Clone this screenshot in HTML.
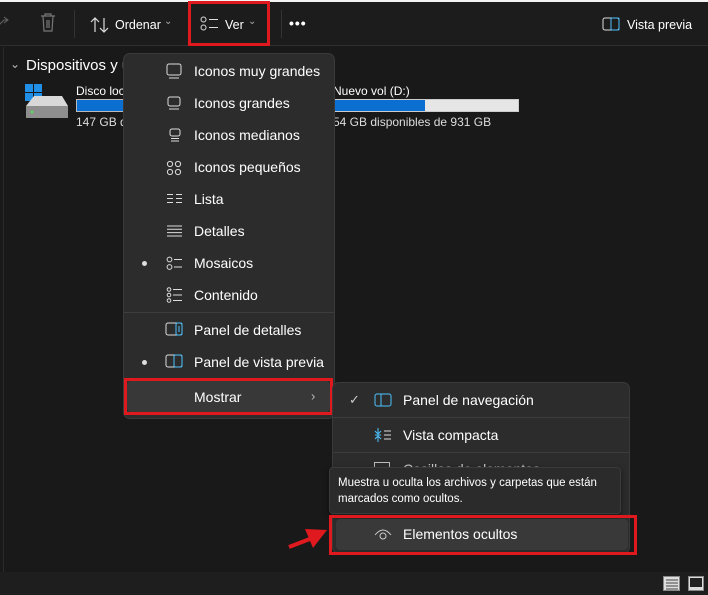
<!DOCTYPE html>
<html><head><meta charset="utf-8"><style>
*{margin:0;padding:0;box-sizing:border-box}
body{width:708px;height:595px;background:#191919;font-family:"Liberation Sans",sans-serif;color:#fff;position:relative;overflow:hidden}
.abs{position:absolute}
.tb{left:0;top:2px;width:708px;height:44px;background:#1c1c1c;border-bottom:1px solid #2e2e2e}
.top{left:0;top:0;width:708px;height:2px;background:#f3f3f3}
.t{font-size:12.5px;color:#fff;white-space:nowrap}
.menu{left:123px;top:53px;width:212px;height:366px;background:#2c2c2c;border:1px solid #3a3a3a;border-radius:7px}
.mi{position:absolute;left:194px;font-size:14px;color:#fff;white-space:nowrap;transform:translateY(-50%)}
.ic{position:absolute}
.sep{position:absolute;height:1px;background:#3d3d3d}
.sub{left:332px;top:382px;width:298px;height:172px;background:#2c2c2c;border:1px solid #3a3a3a;border-radius:7px}
.dot{position:absolute;width:5px;height:5px;border-radius:50%;background:#ddd}
.red{position:absolute;border:3px solid #e0191e}
</style></head><body>
<div class="abs top"></div>
<div class="abs tb"></div>
<svg class="abs" style="left:0;top:12px" width="12" height="20"><path d="M-2 14 L4 8 L8 8 M4 5 L8 8 L4 11" stroke="#666" fill="none"/></svg>
<svg class="abs" style="left:39px;top:13px" width="18" height="19"><path d="M2 3 H16 M6 3 V1 H12 V3 M4 3 L5 18 H13 L14 3 M8 7 V15 M10 7 V15" stroke="#777" fill="none" stroke-width="1.2"/></svg>
<div class="abs" style="left:74px;top:10px;width:1px;height:28px;background:#333"></div>
<svg class="abs" style="left:90px;top:16px" width="20" height="18"><path d="M5 16 V2 M1 6 L5 2 L9 6 M14 2 V16 M10 12 L14 16 L18 12" stroke="#ddd" fill="none" stroke-width="1.2"/></svg>
<div class="abs t" style="left:115px;top:18px">Ordenar</div>
<div class="abs t" style="left:164px;top:16px;color:#aaa;font-size:10px">⌄</div>
<svg class="abs" style="left:200px;top:16px" width="20" height="16"><circle cx="3.5" cy="3.5" r="2.5" stroke="#ddd" fill="none"/><circle cx="3.5" cy="11.5" r="2.5" stroke="#ddd" fill="none"/><path d="M9 3.5H18 M9 11.5H18" stroke="#ddd"/></svg>
<div class="abs t" style="left:225px;top:18px">Ver</div>
<div class="abs t" style="left:248px;top:16px;color:#aaa;font-size:10px">⌄</div>
<div class="red" style="left:188px;top:1px;width:82px;height:45px"></div>
<div class="abs" style="left:281px;top:10px;width:1px;height:28px;background:#333"></div>
<div class="abs t" style="left:289px;top:15px;font-size:14px;letter-spacing:1px;font-weight:bold">•••</div>
<svg class="abs" style="left:602px;top:17px" width="18" height="14"><rect x="1" y="1" width="16" height="12" rx="2" stroke="#ddd" fill="none"/><rect x="9" y="1" width="8" height="12" rx="1" stroke="#4cc2ff" fill="none"/></svg>
<div class="abs t" style="left:627px;top:18px">Vista previa</div>
<div class="abs" style="left:3px;top:47px;width:1px;height:525px;background:#2a2a2a"></div>
<div class="abs" style="left:10px;top:57px;font-size:12px;color:#bbb">⌄</div>
<div class="abs" style="left:26px;top:57px;font-size:15px;color:#fff">Dispositivos y u</div>
<svg class="abs" style="left:24px;top:84px" width="46" height="36"><rect x="1" y="0" width="8" height="8" fill="#1f8fe8"/><rect x="10" y="0" width="8" height="8" fill="#1f8fe8"/><rect x="1" y="9" width="8" height="8" fill="#1f8fe8"/><rect x="10" y="9" width="8" height="8" fill="#1f8fe8"/><path d="M2 22 L10 12 H38 L44 22 Z" fill="#d8d8d8"/><rect x="2" y="22" width="42" height="12" fill="#8e8e8e"/><circle cx="8" cy="28" r="1.5" fill="#5fd35f"/></svg>
<div class="abs" style="left:76px;top:84px;font-size:12px">Disco loc</div>
<div class="abs" style="left:76px;top:99px;width:60px;height:13px;background:#0a6fd0;border:1px solid #bbb"></div>
<div class="abs" style="left:76px;top:115px;font-size:12px;color:#ddd">147 GB d</div>
<div class="abs" style="left:333px;top:84px;font-size:12px">Nuevo vol (D:)</div>
<div class="abs" style="left:333px;top:99px;width:186px;height:13px;background:#e6e6e6;border:1px solid #ccc"></div>
<div class="abs" style="left:333px;top:100px;width:92px;height:11px;background:#0a6fd0"></div>
<div class="abs" style="left:333px;top:115px;font-size:12px;color:#ddd">54 GB disponibles de 931 GB</div>
<div class="abs menu"></div>
<div class="abs" style="left:0;top:0">
<svg class="ic" style="left:166px;top:63px" width="17" height="17"><rect x="1" y="1" width="14" height="11" rx="2" stroke="#ddd" fill="none"/><path d="M3 15H13" stroke="#ddd"/></svg>
<div class="mi" style="top:71px">Iconos muy grandes</div>
<svg class="ic" style="left:167px;top:96px" width="15" height="15"><rect x="1" y="1" width="12" height="9" rx="2" stroke="#ddd" fill="none"/><path d="M2 13H12" stroke="#ddd"/></svg>
<div class="mi" style="top:103px">Iconos grandes</div>
<svg class="ic" style="left:168px;top:128px" width="14" height="15"><rect x="2" y="1" width="10" height="7" rx="2" stroke="#ddd" fill="none"/><path d="M3 10.5H11 M3 13H11" stroke="#ddd"/></svg>
<div class="mi" style="top:135px">Iconos medianos</div>
<svg class="ic" style="left:166px;top:160px" width="16" height="16"><circle cx="4" cy="4" r="2.6" stroke="#ddd" fill="none"/><circle cx="12" cy="4" r="2.6" stroke="#ddd" fill="none"/><circle cx="4" cy="12" r="2.6" stroke="#ddd" fill="none"/><circle cx="12" cy="12" r="2.6" stroke="#ddd" fill="none"/></svg>
<div class="mi" style="top:167px">Iconos pequeños</div>
<svg class="ic" style="left:166px;top:193px" width="17" height="12"><path d="M1 1.5H7 M1 5.5H7 M1 9.5H7 M10 1.5H16 M10 5.5H16 M10 9.5H16" stroke="#ddd"/></svg>
<div class="mi" style="top:199px">Lista</div>
<svg class="ic" style="left:166px;top:225px" width="17" height="12"><path d="M1 1H16 M1 4.3H16 M1 7.6H16 M1 11H16" stroke="#ddd"/></svg>
<div class="mi" style="top:231px">Detalles</div>
<div class="dot" style="left:142px;top:261px"></div>
<svg class="ic" style="left:166px;top:256px" width="17" height="16"><circle cx="3.5" cy="3.5" r="2.4" stroke="#ddd" fill="none"/><circle cx="3.5" cy="11" r="2.4" stroke="#ddd" fill="none"/><path d="M8 3.5H16 M8 11H16" stroke="#ddd"/></svg>
<div class="mi" style="top:263px">Mosaicos</div>
<svg class="ic" style="left:166px;top:287px" width="17" height="17"><circle cx="3" cy="2.5" r="1.8" stroke="#ddd" fill="none"/><circle cx="3" cy="8" r="1.8" stroke="#ddd" fill="none"/><circle cx="3" cy="13.5" r="1.8" stroke="#ddd" fill="none"/><path d="M7 2.5H16 M7 8H16 M7 13.5H16" stroke="#ddd"/></svg>
<div class="mi" style="top:295px">Contenido</div>
<div class="sep" style="left:124px;top:312px;width:210px"></div>
<svg class="ic" style="left:165px;top:322px" width="18" height="15"><rect x="1" y="1" width="16" height="12" rx="2" stroke="#ddd" fill="none"/><path d="M13 5H15 M13 7H15 M13 9H15" stroke="#4cc2ff"/><rect x="11" y="1" width="6" height="12" rx="1.5" stroke="#4cc2ff" fill="none"/></svg>
<div class="mi" style="top:330px">Panel de detalles</div>
<div class="dot" style="left:142px;top:360px"></div>
<svg class="ic" style="left:165px;top:354px" width="18" height="15"><rect x="1" y="1" width="16" height="12" rx="2" stroke="#ddd" fill="none"/><rect x="9" y="1" width="8" height="12" rx="1.5" stroke="#4cc2ff" fill="none"/></svg>
<div class="mi" style="top:362px">Panel de vista previa</div>
<div class="abs" style="left:127px;top:381px;width:203px;height:31px;background:#383838;border-radius:4px"></div>
<div class="mi" style="top:397px">Mostrar</div>
<div class="mi" style="left:311px;top:396px;color:#bbb;font-size:13px">›</div>
<div class="red" style="left:124px;top:378px;width:209px;height:37px"></div>
</div>
<div class="abs sub"></div>
<div class="abs" style="left:349px;top:392px;font-size:13px;color:#ccc">✓</div>
<svg class="ic" style="left:374px;top:393px" width="18" height="15"><rect x="1" y="1" width="16" height="12" rx="2" stroke="#4cc2ff" fill="none"/><path d="M7 1V13" stroke="#4cc2ff"/></svg>
<div class="mi" style="left:403px;top:400px">Panel de navegación</div>
<div class="sep" style="left:333px;top:417px;width:296px"></div>
<svg class="ic" style="left:374px;top:427px" width="18" height="16"><path d="M4 1V6 M1 4L4 7L7 4 M1 8H7 M4 15V10 M1 12L4 9L7 12" stroke="#4cc2ff" fill="none"/><path d="M10 4H17 M10 8H17 M10 12H17" stroke="#ddd"/></svg>
<div class="mi" style="left:403px;top:435px">Vista compacta</div>
<div class="sep" style="left:333px;top:452px;width:296px"></div>
<div class="abs" style="left:374px;top:462px;width:16px;height:8px;border:1px solid #bbb;border-bottom:none"></div>
<div class="abs" style="left:403px;top:461px;font-size:14px;color:#ccc">Casillas de elementos</div>
<div class="abs" style="left:329px;top:467px;width:292px;height:47px;background:#2b2b2b;border:1px solid #3b3b3b;border-radius:4px;box-shadow:0 2px 6px rgba(0,0,0,.5)"></div>
<div class="abs" style="left:338px;top:475px;font-size:11.5px;line-height:16px;color:#fff;width:285px">Muestra u oculta los archivos y carpetas que están marcados como ocultos.</div>
<div class="abs" style="left:336px;top:519px;width:292px;height:31px;background:#393939;border-radius:4px"></div>
<svg class="ic" style="left:374px;top:527px" width="18" height="14"><path d="M1 8 Q9 -2 17 8" stroke="#ccc" fill="none"/><circle cx="9" cy="9" r="3" stroke="#ccc" fill="none"/></svg>
<div class="mi" style="left:403px;top:534px">Elementos ocultos</div>
<div class="red" style="left:329px;top:515px;width:308px;height:40px"></div>
<svg class="abs" style="left:285px;top:522px" width="46" height="30"><path d="M4 25 L30 15" stroke="#e0191e" stroke-width="4"/><path d="M20 7 L42 8 L28 26 Z" fill="#e0191e"/></svg>
<div class="abs" style="left:0;top:572px;width:708px;height:23px;background:#1e1e1e"></div>
<div class="abs" style="left:663px;top:576px;width:17px;height:15px;background:#ddd;border:1px solid #888"></div>
<svg class="abs" style="left:665px;top:578px" width="14" height="12"><path d="M1 2H13 M1 5H13 M1 8H13 M1 11H13" stroke="#444"/></svg>
<div class="abs" style="left:688px;top:576px;width:16px;height:15px;background:#ddd;border:1px solid #888"></div>
<div class="abs" style="left:690px;top:578px;width:12px;height:9px;background:#222"></div>
</body></html>
